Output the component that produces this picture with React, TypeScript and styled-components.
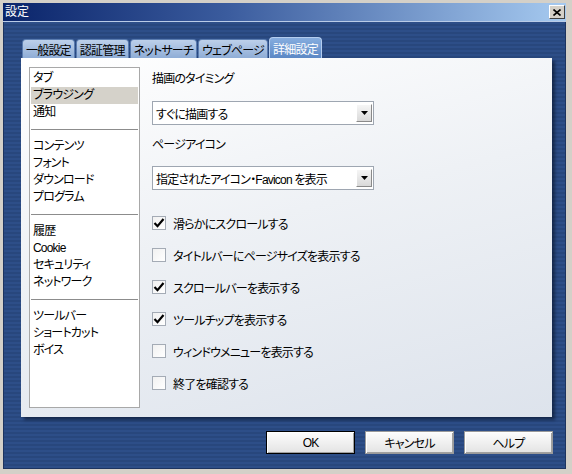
import React from "react";
import styled, { createGlobalStyle } from "styled-components";

const GlobalStyle = createGlobalStyle`
  html, body {
    margin: 0;
    padding: 0;
    background: #d4d0c8;
  }
  body {
    font-family: "Liberation Sans", "Noto Sans CJK JP", sans-serif;
    font-size: 12px;
    letter-spacing: -0.8px;
    font-feature-settings: "palt";
    color: #000;
  }
`;

const tabs = ["一般設定", "認証管理", "ネットサーチ", "ウェブページ", "詳細設定"];

const sections = [
    ["タブ", "ブラウジング", "通知"],
    ["コンテンツ", "フォント", "ダウンロード", "プログラム"],
    ["履歴", "Cookie", "セキュリティ", "ネットワーク"],
    ["ツールバー", "ショートカット", "ボイス"],
];

const options = [
    {label: "滑らかにスクロールする", checked: true},
    {label: "タイトルバーにページサイズを表示する", checked: false},
    {label: "スクロールバーを表示する", checked: true},
    {label: "ツールチップを表示する", checked: true},
    {label: "ウィンドウメニューを表示する", checked: false},
    {label: "終了を確認する", checked: false},
];

const DropArrow = () => (
    <svg width="7" height="4" viewBox="0 0 7 4">
        <path d="M0 0 H7 L3.5 4 Z" fill="#000"/>
    </svg>
);

const CheckMark = () => (
    <svg width="12" height="12" viewBox="0 0 12 12">
        <path d="M1.5 6 L4.5 9.2 L10.5 2" fill="none" stroke="#000" strokeWidth="2.2"/>
    </svg>
);

const Select = ({value}: { value: string }) => (
    <SelectBox>
        <span>{value}</span>
        <ArrowButton><DropArrow/></ArrowButton>
    </SelectBox>
);

export default function App() {
    return (
        <>
            <GlobalStyle/>
            <Window>
                <TitleBar>
                    <Title>設定</Title>
                    <CloseButton>
                        <svg width="8" height="7" viewBox="0 0 8 7">
                            <path d="M0.5 0.5 L7.5 6.5 M7.5 0.5 L0.5 6.5" stroke="#000" strokeWidth="1.6"/>
                        </svg>
                    </CloseButton>
                </TitleBar>
                <Body>
                    <TabRow>
                        {tabs.map((t, i) => (
                            <Tab key={t} $active={i === tabs.length - 1}>{t}</Tab>
                        ))}
                    </TabRow>
                    <Panel>
                        <CategoryList>
                            {sections.map((items, s) => (
                                <React.Fragment key={s}>
                                    {s > 0 && <Separator/>}
                                    {items.map(item => (
                                        <Category key={item} $selected={item === "ブラウジング"}>{item}</Category>
                                    ))}
                                </React.Fragment>
                            ))}
                        </CategoryList>
                        <Settings>
                            <FieldLabel>描画のタイミング</FieldLabel>
                            <Select value="すぐに描画する"/>
                            <FieldLabel $gap>ページアイコン</FieldLabel>
                            <Select value="指定されたアイコン・Favicon を表示"/>
                            <CheckList>
                                {options.map(o => (
                                    <CheckRow key={o.label}>
                                        <CheckBox>{o.checked && <CheckMark/>}</CheckBox>
                                        {o.label}
                                    </CheckRow>
                                ))}
                            </CheckList>
                        </Settings>
                    </Panel>
                    <ButtonRow>
                        <Button $default>OK</Button>
                        <Button>キャンセル</Button>
                        <Button>ヘルプ</Button>
                    </ButtonRow>
                </Body>
            </Window>
        </>
    );
}

const Window = styled.div`
  width: 572px;
  height: 474px;
  box-sizing: border-box;
  padding: 3px 6px 5px 3px;
  background: #d4d0c8;
  display: flex;
  flex-direction: column;
`
const TitleBar = styled.div`
  height: 18px;
  display: flex;
  align-items: center;
  justify-content: space-between;
  background: linear-gradient(to right, #0a246a, #3b5c9e 40%, #a6caf0);
  border-bottom: 1px solid #b9cbe6;
`
const Title = styled.span`
  color: #fff;
  padding-left: 2px;
  font-size: 12px;
  letter-spacing: 0;
  line-height: 18px;
`
const CloseButton = styled.div`
  width: 16px;
  height: 14px;
  box-sizing: border-box;
  margin-right: 1px;
  display: flex;
  align-items: center;
  justify-content: center;
  background: #d4d0c8;
  border: 1px solid;
  border-color: #fff #404040 #404040 #fff;
`
const Body = styled.div`
  flex: 1;
  padding: 15px 13px 0 17px;
  border: 1px solid #1d3460;
  border-top: none;
  background: repeating-linear-gradient(to bottom, #2d4e88 0 2px, #28477d 2px 4px);
`
const TabRow = styled.div`
  display: flex;
  align-items: flex-end;
  gap: 1px;
  height: 21px;
  padding-left: 1px;
`
const Tab = styled.div<{ $active?: boolean }>`
  height: ${p => (p.$active ? 21 : 19)}px;
  box-sizing: border-box;
  padding: 0 3px;
  display: flex;
  align-items: center;
  border: 1px solid ${p => (p.$active ? "#b4cdef" : "#5a7cb0")};
  border-bottom: none;
  border-radius: 4px 4px 0 0;
  background: ${p => (p.$active
          ? "linear-gradient(#86addf, #5c88c5)"
          : "linear-gradient(#bdd0ea, #8fadd6)")};
  color: ${p => (p.$active ? "#fff" : "#000")};
  font-size: 12px;
`
const Panel = styled.div`
  height: 359px;
  box-sizing: border-box;
  display: flex;
  gap: 12px;
  padding: 9px 8px;
  background: linear-gradient(165deg, #ffffff 0%, #eef1f5 45%, #dde3ec 100%);
  box-shadow: 3px 3px 3px rgba(5, 15, 35, 0.55);
`
const CategoryList = styled.div`
  width: 111px;
  height: 341px;
  box-sizing: border-box;
  padding: 2px 1px;
  border: 1px solid #a8a8a8;
  background: #fff;
`
const Category = styled.div<{ $selected?: boolean }>`
  height: 17px;
  line-height: 17px;
  padding-left: 2px;
  white-space: nowrap;
  background: ${p => (p.$selected ? "#d5d2ca" : "transparent")};
`
const Separator = styled.div`
  height: 17px;
  display: flex;
  align-items: center;

  &::after {
    content: "";
    flex: 1;
    height: 1px;
    background: #8c8c8c;
  }
`
const Settings = styled.div`
  display: flex;
  flex-direction: column;
  padding-top: 4px;
`
const FieldLabel = styled.div<{ $gap?: boolean }>`
  line-height: 17px;
  margin-top: ${p => (p.$gap ? 12 : 0)}px;
  margin-bottom: ${p => (p.$gap ? 12 : 13)}px;
`
const SelectBox = styled.div`
  width: 222px;
  height: 24px;
  box-sizing: border-box;
  display: flex;
  align-items: center;
  padding: 0 1px 0 3px;
  border: 1px solid #9ea6b1;
  background: #fff;
`
const ArrowButton = styled.div`
  margin-left: auto;
  width: 16px;
  height: 18px;
  box-sizing: border-box;
  display: flex;
  align-items: center;
  justify-content: center;
  border: 1px solid;
  border-color: #fff #8a8a8a #8a8a8a #fff;
  background: linear-gradient(#f6f6f6, #d9d9d9);
`
const CheckList = styled.div`
  margin-top: 17px;
  display: flex;
  flex-direction: column;
`
const CheckRow = styled.div`
  height: 32px;
  display: flex;
  align-items: center;
  gap: 7px;
  white-space: nowrap;
`
const CheckBox = styled.div`
  width: 14px;
  height: 14px;
  box-sizing: border-box;
  display: flex;
  align-items: center;
  justify-content: center;
  border: 1px solid #a4abb5;
  background: linear-gradient(135deg, #f1f1f1, #ffffff);
`
const ButtonRow = styled.div`
  margin-top: 14px;
  margin-right: -1px;
  display: flex;
  justify-content: flex-end;
  gap: 10px;
`
const Button = styled.div<{ $default?: boolean }>`
  width: 89px;
  height: 23px;
  box-sizing: border-box;
  display: flex;
  align-items: center;
  justify-content: center;
  background: linear-gradient(#fdfdfd, #e3e3e3);
  border: 1px solid ${p => (p.$default ? "#000" : "#9a9a9a")};
  box-shadow: inset 1px 1px #fff, inset -1px -1px #a0a0a0;
`
